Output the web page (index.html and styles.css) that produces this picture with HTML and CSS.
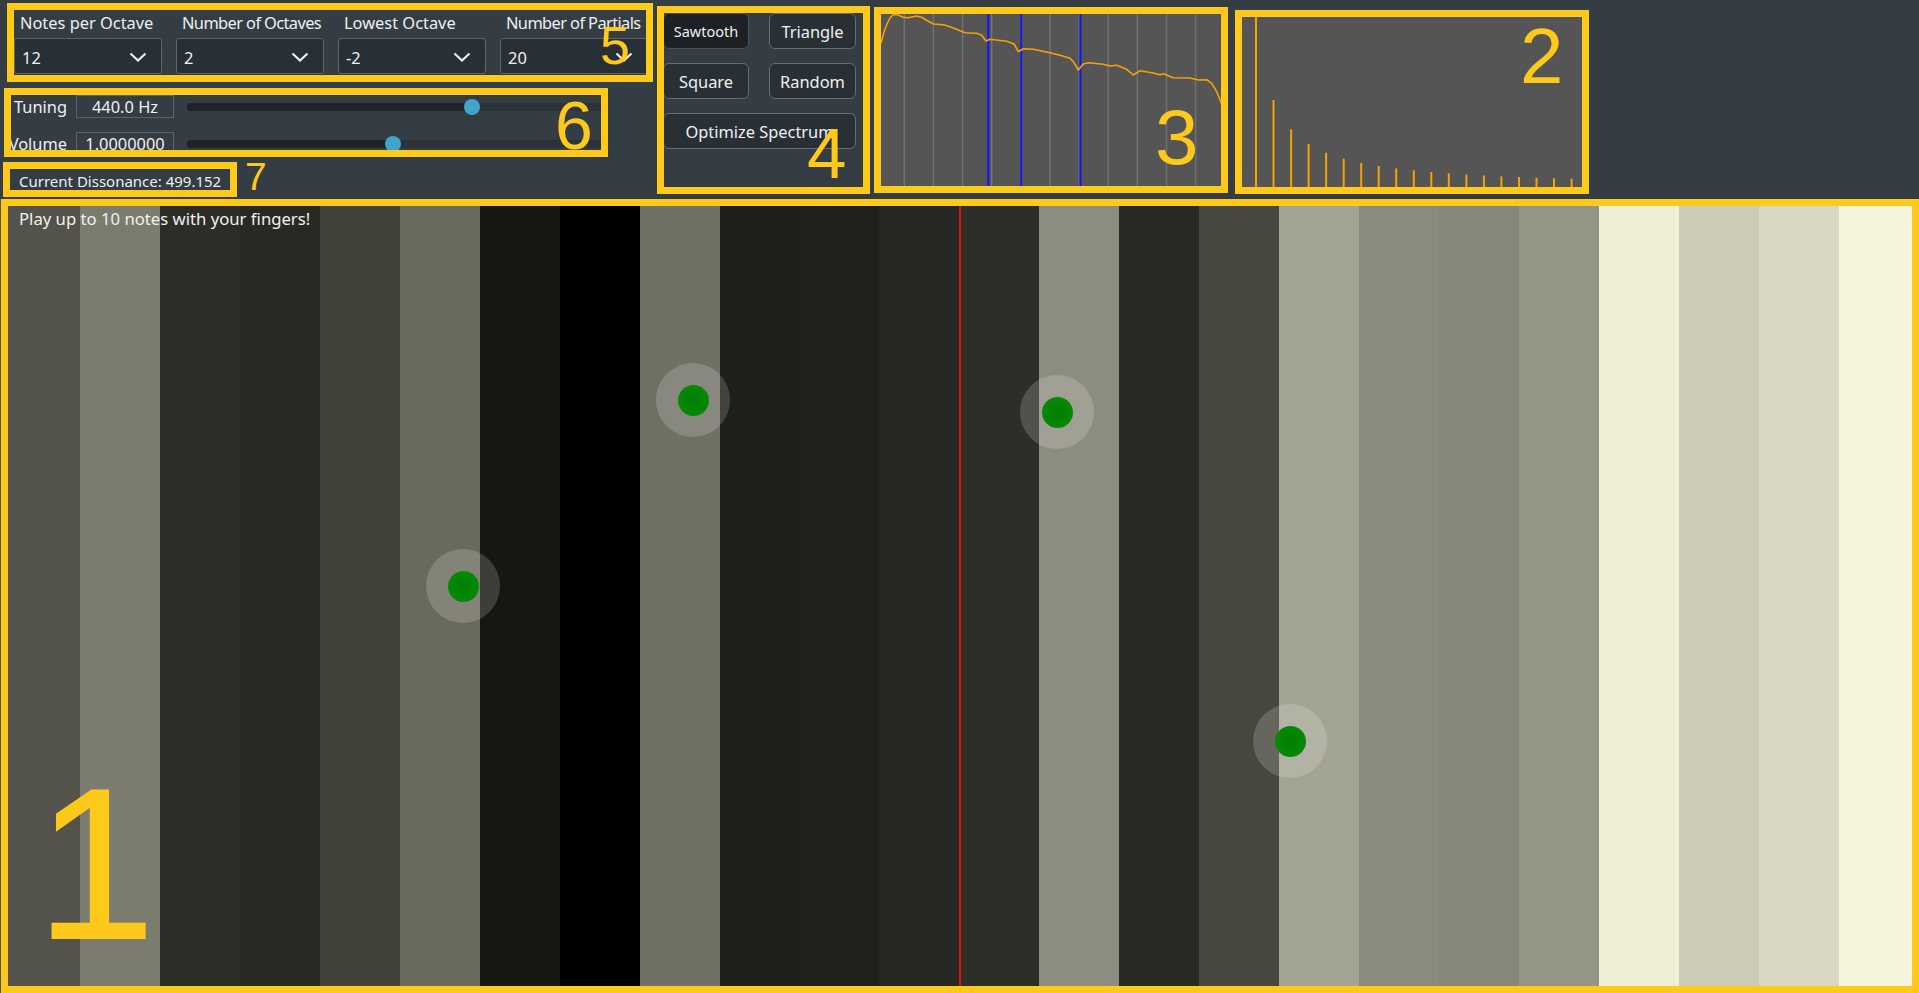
FILE: index.html
```html
<!DOCTYPE html>
<html>
<head>
<meta charset="utf-8">
<title>Dissonance Explorer</title>
<link rel="stylesheet" href="styles.css">
</head>
<body>
<div class="app">
  <div class="top">
    <div class="left">
      <div class="combos">
        <div class="field"><label>Notes per Octave</label><div class="combo"><span>12</span><svg class="chev" width="18" height="10" viewBox="0 0 18 10"><path d="M1.5 1.5 L9 8.5 L16.5 1.5" /></svg></div></div>
        <div class="field"><label class="tight">Number of Octaves</label><div class="combo"><span>2</span><svg class="chev" width="18" height="10" viewBox="0 0 18 10"><path d="M1.5 1.5 L9 8.5 L16.5 1.5" /></svg></div></div>
        <div class="field"><label>Lowest Octave</label><div class="combo"><span>-2</span><svg class="chev" width="18" height="10" viewBox="0 0 18 10"><path d="M1.5 1.5 L9 8.5 L16.5 1.5" /></svg></div></div>
        <div class="field"><label class="tight">Number of Partials</label><div class="combo"><span>20</span><svg class="chev" width="18" height="10" viewBox="0 0 18 10"><path d="M1.5 1.5 L9 8.5 L16.5 1.5" /></svg></div></div>
      </div>
      <div class="sliders">
        <div class="srow"><span class="lbl">Tuning</span><span class="val">440.0 Hz</span><div class="track"><div class="fill" style="width:285px"></div><div class="handle" style="left:285px"></div></div></div>
        <div class="srow"><span class="lbl">Volume</span><span class="val">1.0000000</span><div class="track"><div class="fill" style="width:206px"></div><div class="handle" style="left:206px"></div></div></div>
      </div>
      <div class="diss">Current Dissonance: 499.152</div>
    </div>
    <div class="buttons">
      <div class="btn active">Sawtooth</div>
      <div class="btn">Triangle</div>
      <div class="btn">Square</div>
      <div class="btn">Random</div>
      <div class="btn wide">Optimize Spectrum</div>
    </div>
    <div class="chart spectrum">
      <svg width="341" height="173" viewBox="0 0 341 173">
        <g class="grid">
          <line x1="23.3" y1="0" x2="23.3" y2="173"/>
          <line x1="52.4" y1="0" x2="52.4" y2="173"/>
          <line x1="81.6" y1="0" x2="81.6" y2="173"/>
          <line x1="110.7" y1="0" x2="110.7" y2="173"/>
          <line x1="139.8" y1="0" x2="139.8" y2="173"/>
          <line x1="169" y1="0" x2="169" y2="173"/>
          <line x1="198.1" y1="0" x2="198.1" y2="173"/>
          <line x1="227.2" y1="0" x2="227.2" y2="173"/>
          <line x1="256.3" y1="0" x2="256.3" y2="173"/>
          <line x1="285.5" y1="0" x2="285.5" y2="173"/>
          <line x1="314.6" y1="0" x2="314.6" y2="173"/>
        </g>
        <g class="notes">
          <line x1="107.3" y1="0" x2="107.3" y2="173"/>
          <line x1="140.2" y1="0" x2="140.2" y2="173"/>
          <line x1="199.4" y1="0" x2="199.4" y2="173"/>
        </g>
        <polyline class="curve" points="0,29.3 3,18 6,10 9,4 12.3,0.5 17.3,1 22.3,3.3 27.3,3.7 35.7,2 40.7,3.3 46,6.5 52.3,10 62.3,10.7 69,12.7 76,15.5 84,18.7 95.7,19.3 100.7,21.3 105,27 109,25.3 117.3,26.3 125.7,27.3 133,30 137.3,37.7 142.3,34.7 152.3,35.3 169,38.7 180,41.5 189,44.3 192.3,47.7 197.3,56 202.3,50 207.3,48.7 222.3,50.3 229,52 235.7,51.3 245.7,55.3 252.3,61 259,56.7 272.3,59 279,60.7 282.3,59.7 292.3,63.7 309,64 317.3,66 325.7,65.7 330.7,69.3 335.7,77.7 340.7,90"/>
      </svg>
    </div>
    <div class="chart partials">
      <svg width="340" height="171" viewBox="0 0 340 171">
        <g class="bars">
          <line x1="14" y1="171" x2="14" y2="0"/>
          <line x1="31.5" y1="171" x2="31.5" y2="83"/>
          <line x1="49.1" y1="171" x2="49.1" y2="112.3"/>
          <line x1="66.6" y1="171" x2="66.6" y2="127"/>
          <line x1="84.1" y1="171" x2="84.1" y2="135.8"/>
          <line x1="101.7" y1="171" x2="101.7" y2="141.7"/>
          <line x1="119.2" y1="171" x2="119.2" y2="145.9"/>
          <line x1="136.7" y1="171" x2="136.7" y2="149"/>
          <line x1="154.2" y1="171" x2="154.2" y2="151.4"/>
          <line x1="171.8" y1="171" x2="171.8" y2="153.4"/>
          <line x1="189.3" y1="171" x2="189.3" y2="155"/>
          <line x1="206.8" y1="171" x2="206.8" y2="156.3"/>
          <line x1="224.4" y1="171" x2="224.4" y2="157.5"/>
          <line x1="241.9" y1="171" x2="241.9" y2="158.4"/>
          <line x1="259.4" y1="171" x2="259.4" y2="159.3"/>
          <line x1="277" y1="171" x2="277" y2="160"/>
          <line x1="294.5" y1="171" x2="294.5" y2="160.6"/>
          <line x1="312" y1="171" x2="312" y2="161.2"/>
          <line x1="329.6" y1="171" x2="329.6" y2="161.7"/>
        </g>
      </svg>
    </div>
  </div>
  <div class="play">
    <div class="key k0"></div><div class="key k1"></div><div class="key k2"></div><div class="key k3"></div>
    <div class="key k4"></div><div class="key k5"></div><div class="key k6"></div><div class="key k7"></div>
    <div class="key k8"></div><div class="key k9"></div><div class="key k10"></div><div class="key k11"></div>
    <div class="key k12"></div><div class="key k13"></div><div class="key k14"></div><div class="key k15"></div>
    <div class="key k16"></div><div class="key k17"></div><div class="key k18"></div><div class="key k19"></div>
    <div class="key k20"></div><div class="key k21"></div><div class="key k22"></div><div class="key k23"></div>
    <div class="hint">Play up to 10 notes with your fingers!</div>
    <div class="center-line"></div>
    <div class="touch" style="left:463px;top:387px"><div class="dot"></div></div>
    <div class="touch" style="left:693px;top:201px"><div class="dot"></div></div>
    <div class="touch" style="left:1057px;top:213px"><div class="dot"></div></div>
    <div class="touch" style="left:1290px;top:542px"><div class="dot"></div></div>
  </div>
</div>
<div class="annotations">
  <div class="abox b5"></div>
  <div class="abox b6"></div>
  <div class="abox b7"></div>
  <div class="abox b4"></div>
  <div class="abox b3"></div>
  <div class="abox b2"></div>
  <div class="abox b1"></div>
  <span class="num n5">5</span>
  <span class="num n6">6</span>
  <span class="num n7">7</span>
  <span class="num n4">4</span>
  <span class="num n3">3</span>
  <span class="num n2">2</span>
  <span class="num n1">1</span>
</div>
</body>
</html>
```

FILE: styles.css
```css
html, body {
  margin: 0;
  padding: 0;
  width: 1919px;
  height: 993px;
  overflow: hidden;
  background: #343d44;
  font-family: "Noto Sans", "Open Sans", sans-serif;
  color: #eff0f1;
}
body { position: relative; }

.app {
  display: flex;
  flex-direction: column;
  height: 993px;
}

.top {
  display: flex;
  height: 199px;
  flex: none;
}

.left {
  width: 648px;
  display: flex;
  flex-direction: column;
}

.combos {
  display: flex;
  gap: 14px;
  margin-top: 13px;
  margin-left: 14px;
}
.field {
  width: 148px;
  display: flex;
  flex-direction: column;
}
.field label {
  font-size: 16.4px;
  line-height: 20px;
  height: 20px;
  padding-left: 6px;
  white-space: nowrap;
}
.field label.tight { letter-spacing: -0.6px; }
.combo {
  margin-top: 5px;
  height: 36px;
  box-sizing: border-box;
  border: 1px solid #5c6469;
  border-radius: 3px;
  background: #283036;
  display: flex;
  align-items: center;
  justify-content: space-between;
  padding: 2px 14px 0 7px;
  font-size: 16.4px;
}
.chev path {
  fill: none;
  stroke: #eff0f1;
  stroke-width: 2.2;
}

.sliders {
  margin-top: 21px;
  display: flex;
  flex-direction: column;
  gap: 14px;
}
.srow {
  display: flex;
  align-items: center;
  height: 23px;
}
.lbl {
  width: 67px;
  text-align: right;
  font-size: 16.4px;
  line-height: 20px;
}
.val {
  margin-left: 9px;
  width: 98px;
  height: 23px;
  box-sizing: border-box;
  border: 1px solid #5c6469;
  text-align: center;
  font-size: 16.4px;
  line-height: 21px;
}
.track {
  margin-left: 13px;
  width: 414px;
  height: 8px;
  border-radius: 4px;
  background: #2b3238;
  position: relative;
}
.fill {
  height: 100%;
  background: #1d2327;
  border-radius: 4px;
}
.handle {
  position: absolute;
  top: -4px;
  width: 16px;
  height: 16px;
  margin-left: -8px;
  border-radius: 50%;
  background: #40a4cb;
}

.diss {
  margin-top: 16px;
  padding-left: 19px;
  font-size: 15px;
  line-height: 20px;
}

.buttons {
  margin-left: 15px;
  margin-top: 13px;
  width: 193px;
  display: grid;
  grid-template-columns: 86px 87px;
  grid-auto-rows: 36px;
  column-gap: 20px;
  row-gap: 14px;
  align-content: start;
}
.btn {
  box-sizing: border-box;
  border: 1px solid #656d72;
  border-radius: 6px;
  background: #283036;
  font-size: 16.4px;
  display: flex;
  align-items: center;
  justify-content: center;
  white-space: nowrap;
}
.btn.active {
  background: #1c2125;
  border-color: #4a5257;
  font-size: 14.5px;
}
.btn.wide { grid-column: span 2; }

.chart {
  background: #555555;
  overflow: hidden;
}
.chart svg { display: block; }
.spectrum {
  margin-left: 25px;
  margin-top: 14px;
  width: 341px;
  height: 173px;
}
.partials {
  margin-left: 20px;
  margin-top: 17px;
  width: 340px;
  height: 171px;
}
.grid line { stroke: #717171; stroke-width: 1.5; }
.notes line { stroke: #1414f0; stroke-width: 2; }
.curve { fill: none; stroke: #f5a300; stroke-width: 1.6; stroke-linejoin: round; }
.bars line { stroke: #f5a300; stroke-width: 2; }

.play {
  flex: 1;
  display: flex;
  position: relative;
  overflow: hidden;
}
.key { flex: 1; }
.k0 { background: #53534b; }
.k1 { background: #7c7c6e; }
.k2 { background: #2d2d28; }
.k3 { background: #292924; }
.k4 { background: #41413a; }
.k5 { background: #6a6a5c; }
.k6 { background: #161612; }
.k7 { background: #000000; }
.k8 { background: #707064; }
.k9 { background: #1e1e1a; }
.k10 { background: #20201c; }
.k11 { background: #262622; }
.k12 { background: #2e2e29; }
.k13 { background: #8d8d7f; }
.k14 { background: #292924; }
.k15 { background: #47473f; }
.k16 { background: #a4a493; }
.k17 { background: #8b8b7d; }
.k18 { background: #878779; }
.k19 { background: #959585; }
.k20 { background: #efefd6; }
.k21 { background: #cbcbb7; }
.k22 { background: #d8d8c3; }
.k23 { background: #f5f5dc; }

.hint {
  position: absolute;
  left: 19px;
  top: 10px;
  font-size: 16.7px;
  line-height: 20px;
  color: #f0f0f0;
}
.center-line {
  position: absolute;
  left: 959px;
  top: 0;
  bottom: 0;
  width: 2px;
  background: #e01010;
}
.touch {
  position: absolute;
  width: 74px;
  height: 74px;
  margin-left: -37px;
  margin-top: -37px;
  border-radius: 50%;
  background: rgba(255, 255, 255, 0.17);
  display: flex;
  align-items: center;
  justify-content: center;
}
.dot {
  width: 31px;
  height: 31px;
  border-radius: 50%;
  background: radial-gradient(circle, #007f00 0%, #0a8c0a 100%);
}

.annotations {
  position: absolute;
  left: 0;
  top: 0;
  width: 1919px;
  height: 993px;
  pointer-events: none;
}
.abox {
  position: absolute;
  box-sizing: border-box;
  border: 7px solid #fdc91b;
}
.b5 { left: 7px; top: 3px; width: 646px; height: 79px; }
.b6 { left: 4px; top: 88px; width: 604px; height: 69px; }
.b7 { left: 3px; top: 162px; width: 234px; height: 35px; }
.b4 { left: 657px; top: 6px; width: 213px; height: 188px; }
.b3 { left: 874px; top: 7px; width: 354px; height: 186px; }
.b2 { left: 1235px; top: 10px; width: 354px; height: 184px; }
.b1 { left: 1px; top: 199px; width: 1918px; height: 794px; }

.num {
  position: absolute;
  font-family: "Liberation Sans", Arial, sans-serif;
  line-height: 1;
  color: #fdc91b;
}
.n5 { font-size: 54px; left: 600px; top: 18px; }
.n6 { font-size: 68px; left: 555px; top: 91px; }
.n7 { font-size: 39px; left: 245px; top: 157px; }
.n4 { font-size: 71px; left: 807px; top: 118px; }
.n3 { font-size: 78px; left: 1155px; top: 98px; }
.n2 { font-size: 78px; left: 1520px; top: 17px; }
.n1 { font-size: 218px; left: 35px; top: 755px; }
```
